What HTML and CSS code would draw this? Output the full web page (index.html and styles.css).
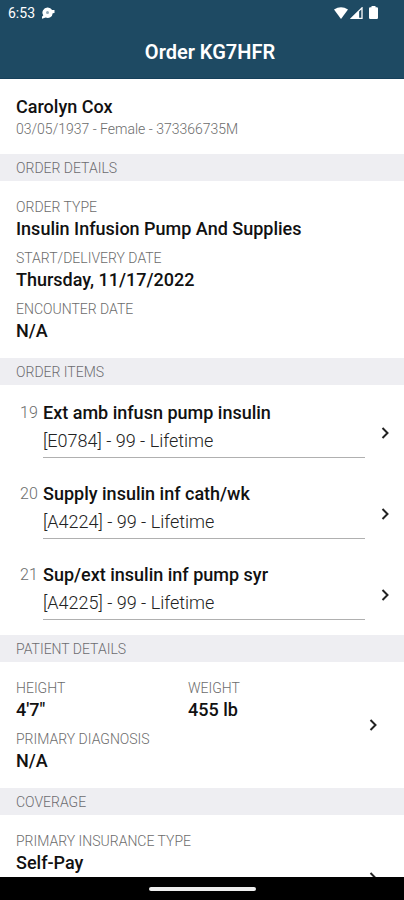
FILE: index.html
```html
<!DOCTYPE html>
<html lang="en">
<head>
    <meta charset="UTF-8">
    <meta name="viewport" content="width=device-width, initial-scale=1">
    <title>Order KG7HFR</title>
    <link rel="stylesheet" href="styles.css">
</head>
<body>
<header>
    <div class="status">
        <span>6:53</span>
        <svg class="notice" width="14" height="12" viewBox="0 0 14 12">
            <path d="M6.500 .5a5 5 0 0 1 4.600 2.500l2.400.1v3l-1.800.2a5 5 0 0 1-7 4.300L1 11.700v-2l1.300-1.400A5 5 0 0 1 6.500 .5z" fill="#fff"/>
            <circle cx="6.500" cy="5.500" r="1.500" fill="#8fa5b3"/>
        </svg>
        <div class="system">
            <svg width="14" height="12" viewBox="0 0 14 12">
                <path d="M0 2.500Q7-2 14 2.500L7 12z" fill="#fff"/>
            </svg>
            <svg width="13" height="12" viewBox="0 0 13 12">
                <path d="M1.500 11.300L12 .9v10.400zM8.500 5v6" fill="none" stroke="#fff" stroke-width="1.300"/>
                <path d="M1 11.500L8.500 4v7.500z" fill="#fff"/>
            </svg>
            <svg class="battery" width="9" height="13" viewBox="0 0 9 13">
                <path d="M2.500 0h4v1.200h1.300q1.200 0 1.200 1.200v9.400q0 1.200-1.200 1.200H1.200Q0 13 0 11.800V2.400q0-1.200 1.200-1.200h1.300z" fill="#fff"/>
            </svg>
        </div>
    </div>
    <h1>Order KG7HFR</h1>
</header>

<main>
    <div class="patient">
        <strong>Carolyn Cox</strong>
        <span>03/05/1937 - Female - 373366735M</span>
    </div>

    <h2>ORDER DETAILS</h2>
    <dl class="details">
        <div>
            <dt>ORDER TYPE</dt>
            <dd>Insulin Infusion Pump And Supplies</dd>
        </div>
        <div>
            <dt>START/DELIVERY DATE</dt>
            <dd>Thursday, 11/17/2022</dd>
        </div>
        <div>
            <dt>ENCOUNTER DATE</dt>
            <dd>N/A</dd>
        </div>
    </dl>

    <h2>ORDER ITEMS</h2>
    <div class="items">
        <a class="item" href="#">
            <span class="number">19</span>
            <div class="item-text">
                <strong>Ext amb infusn pump insulin</strong>
                <span>[E0784] - 99 - Lifetime</span>
            </div>
            <svg class="chevron" viewBox="0 0 8 12"><path d="M1.500 1L6.500 6l-5 5"/></svg>
        </a>
        <a class="item" href="#">
            <span class="number">20</span>
            <div class="item-text">
                <strong>Supply insulin inf cath/wk</strong>
                <span>[A4224] - 99 - Lifetime</span>
            </div>
            <svg class="chevron" viewBox="0 0 8 12"><path d="M1.500 1L6.500 6l-5 5"/></svg>
        </a>
        <a class="item" href="#">
            <span class="number">21</span>
            <div class="item-text">
                <strong>Sup/ext insulin inf pump syr</strong>
                <span>[A4225] - 99 - Lifetime</span>
            </div>
            <svg class="chevron" viewBox="0 0 8 12"><path d="M1.500 1L6.500 6l-5 5"/></svg>
        </a>
    </div>

    <h2>PATIENT DETAILS</h2>
    <a class="linked" href="#">
        <dl class="details columns">
            <div>
                <dt>HEIGHT</dt>
                <dd>4'7"</dd>
            </div>
            <div>
                <dt>WEIGHT</dt>
                <dd>455 lb</dd>
            </div>
            <div>
                <dt>PRIMARY DIAGNOSIS</dt>
                <dd>N/A</dd>
            </div>
        </dl>
        <svg class="chevron" viewBox="0 0 8 12"><path d="M1.500 1L6.500 6l-5 5"/></svg>
    </a>

    <h2>COVERAGE</h2>
    <a class="linked" href="#">
        <dl class="details">
            <div>
                <dt>PRIMARY INSURANCE TYPE</dt>
                <dd>Self-Pay</dd>
            </div>
        </dl>
        <svg class="chevron" viewBox="0 0 8 12"><path d="M1.500 1L6.500 6l-5 5"/></svg>
    </a>
</main>

<div class="nav-bar"><span></span></div>
</body>
</html>
```
FILE: styles.css
```css
* {
    box-sizing: border-box;
}

body {
    margin: 0;
    height: 100vh;
    display: flex;
    flex-direction: column;
    background: white;
    color: #111;
    font-family: Roboto, sans-serif;
    font-size: 18px;
    line-height: 24px;
}

header {
    flex: none;
    background: #1e4a63;
    color: white;
    border-bottom: 1px solid #16405a;
}

.status {
    height: 25px;
    display: flex;
    align-items: center;
    padding: 0 26px 0 8px;
    font-size: 14px;
}

.notice {
    margin-left: 6px;
}

.system {
    display: flex;
    align-items: center;
    gap: 2px;
    margin-left: auto;
}

.battery {
    margin-left: 4px;
}

h1 {
    margin: 0;
    padding: 15px 0 14px 16px;
    font-size: 20px;
    font-weight: 600;
    line-height: 24px;
    text-align: center;
}

main {
    flex: 1;
    min-height: 0;
    overflow: hidden;
}

.patient {
    display: flex;
    flex-direction: column;
    padding: 16px 16px 15px;
}

.patient span {
    color: #6c6c6c;
    font-size: 14px;
    font-weight: 300;
    line-height: 20px;
}

strong,
dd {
    font-weight: 500;
}

h2 {
    margin: 0;
    padding: 4px 16px 3px;
    background: #eeeef2;
    color: #6c6c70;
    font-size: 14px;
    font-weight: 300;
    line-height: 20px;
}

.details {
    display: grid;
    gap: 7px;
    margin: 0;
    padding: 16px 16px 15px;
}

.columns {
    grid-template-columns: 1fr 1fr;
}

dt {
    color: #6c6c6c;
    font-size: 14px;
    font-weight: 300;
    line-height: 20px;
}

dd {
    margin: 0;
}

.items {
    display: flex;
    flex-direction: column;
    gap: 24px;
    padding: 16px 15px 15px 16px;
}

a {
    color: inherit;
    text-decoration: none;
}

.item {
    display: flex;
    align-items: center;
}

.number {
    align-self: flex-start;
    width: 27px;
    padding-left: 4px;
    color: #6c6c6c;
    font-size: 16px;
    font-weight: 300;
}

.item-text {
    flex: 1;
    display: flex;
    flex-direction: column;
    border-bottom: 1px solid #b0b0b0;
}

.item-text span {
    color: #222;
    font-weight: 300;
    line-height: 32px;
}

.chevron {
    flex: none;
    width: 8px;
    height: 12px;
    margin-left: 16px;
    fill: none;
    stroke: #222;
    stroke-width: 2;
}

.item .chevron {
    margin-top: 6px;
}

.linked {
    display: flex;
    align-items: center;
    min-height: 126px;
    padding-right: 27px;
}

.linked .details {
    flex: 1;
    align-self: flex-start;
    padding-right: 0;
}

.nav-bar {
    flex: none;
    display: flex;
    justify-content: center;
    align-items: center;
    height: 23px;
    background: black;
}

.nav-bar span {
    width: 107px;
    height: 4px;
    border-radius: 2px;
    background: #eee;
}
```
